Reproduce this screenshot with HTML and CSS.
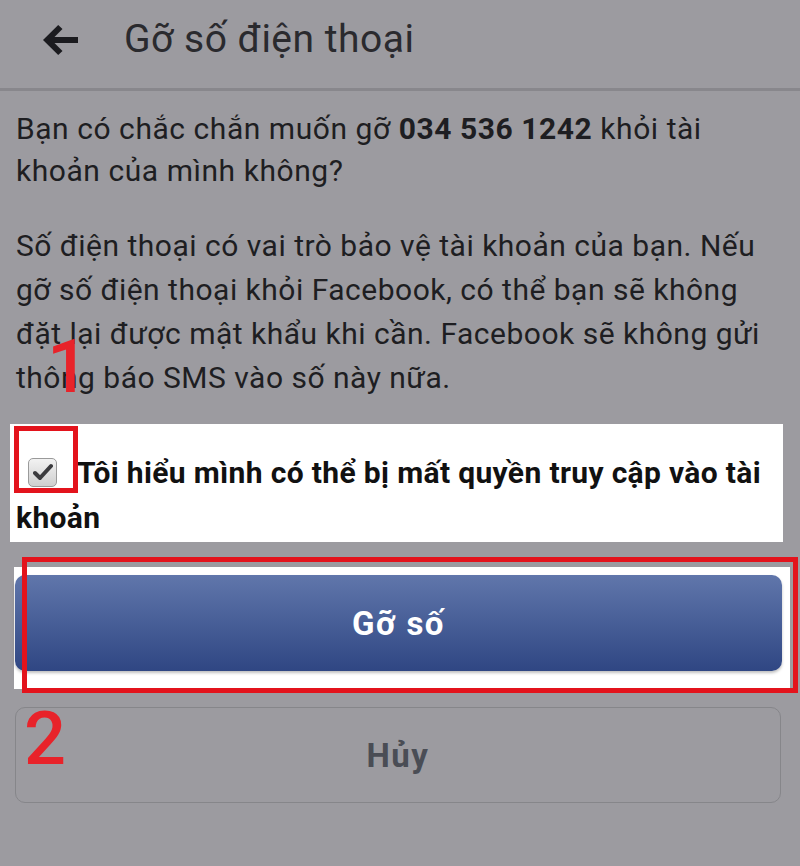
FILE: index.html
```html
<!DOCTYPE html>
<html lang="vi">
<head>
<meta charset="utf-8">
<title>Gỡ số điện thoại</title>
<link rel="stylesheet" href="styles.css">
</head>
<body>
<header class="topbar">
  <svg class="back" width="38" height="30" viewBox="0 0 38 30" aria-hidden="true">
    <path d="M37 12H13.5l8-8L17.2 0 2 15l15.2 15 4.3-4-8-8H37z" fill="#1b1b1f"/>
  </svg>
  <h1 class="title">Gỡ số điện thoại</h1>
</header>
<main class="content">
  <p class="q">Bạn có chắc chắn muốn gỡ <b>034 536 1242</b> khỏi tài<br>khoản của mình không?</p>
  <p class="info">Số điện thoại có vai trò bảo vệ tài khoản của bạn. Nếu<br>gỡ số điện thoại khỏi Facebook, có thể bạn sẽ không<br>đặt lại được mật khẩu khi cần. Facebook sẽ không gửi<br>thông báo SMS vào số này nữa.</p>
  <div class="confirm">
    <span class="check"><svg width="20" height="18" viewBox="0 0 20 18"><path d="M2 10l5 5L18 3" fill="none" stroke="#3b3b3e" stroke-width="4" stroke-linecap="round" stroke-linejoin="round"/></svg></span>Tôi hiểu mình có thể bị mất quyền truy cập vào tài<br>khoản
  </div>
  <div class="go-wrap">
    <button class="btn-primary">Gỡ số</button>
  </div>
  <button class="btn-cancel">Hủy</button>
</main>
<div class="mark mark-box1"></div>
<div class="mark mark-box2"></div>
<div class="mark num num1">1</div>
<div class="mark num num2">2</div>
</body>
</html>
```
FILE: styles.css
```css
html, body {
  margin: 0;
  padding: 0;
}
body {
  background: #9c9ba0;
  font-family: Roboto, "Noto Sans", sans-serif;
  color: #1e1e22;
  width: 800px;
  height: 866px;
  overflow: hidden;
  position: relative;
}
.topbar {
  height: 88px;
  border-bottom: 3px solid #88878c;
  display: flex;
  align-items: center;
  padding-left: 41px;
}
.back {
  display: block;
  margin-top: -8px;
}
.title {
  margin: -10px 0 0 45px;
  font-size: 39px;
  letter-spacing: 0.5px;
  font-weight: 400;
  color: #2a2a2e;
}
.content {
  padding: 0 0 0 16px;
}
.q {
  margin: 17px 0 0 0;
  font-size: 30px;
  letter-spacing: 0.55px;
  line-height: 42px;
  white-space: nowrap;
}
.info {
  margin: 32px 0 0 0;
  font-size: 30px;
  letter-spacing: 0.5px;
  line-height: 44px;
  white-space: nowrap;
}
.confirm {
  margin: 24px 17px 0 -6px;
  background: #fff;
  padding: 26px 6px 2px;
  font-size: 30px;
  letter-spacing: 0.35px;
  line-height: 45px;
  font-weight: 700;
  color: #111;
  white-space: nowrap;
}
.check {
  display: inline-flex;
  align-items: center;
  justify-content: center;
  width: 29px;
  height: 29px;
  box-sizing: border-box;
  border: 1px solid #9a9a9a;
  border-radius: 5px;
  background: linear-gradient(#f2f2f2, #cfcfcf);
  vertical-align: 2px;
  margin: 0 20px 0 12px;
}
.go-wrap {
  margin: 25px 10px 0 -2px;
  background: #fff;
  padding: 8px 8px 18px 1px;
}
.btn-primary {
  display: block;
  width: 100%;
  height: 96px;
  border: 0;
  border-radius: 10px;
  background: linear-gradient(#6076ab, #2f4683);
  color: #fff;
  font-family: Roboto, sans-serif;
  font-weight: 700;
  font-size: 33px;
  letter-spacing: 1.5px;
  box-shadow: 0 2px 3px rgba(0,0,0,0.25);
}
.btn-cancel {
  display: block;
  margin: 18px 0 0 -1px;
  width: 766px;
  height: 96px;
  border: 1px solid #86868a;
  border-radius: 10px;
  background: #9c9ba0;
  color: #4a4d55;
  font-family: Roboto, sans-serif;
  font-weight: 700;
  font-size: 33px;
  letter-spacing: 1.5px;
}
.mark {
  position: absolute;
}
.mark-box1 {
  left: 14px;
  top: 426px;
  width: 64px;
  height: 67px;
  box-sizing: border-box;
  border: 5px solid #e3131c;
}
.mark-box2 {
  left: 22px;
  top: 557px;
  width: 776px;
  height: 136px;
  box-sizing: border-box;
  border: 5px solid #e3131c;
}
.num {
  font-family: Roboto, sans-serif;
  font-weight: 500;
  color: #e8232a;
  font-size: 74px;
  line-height: 1;
}
.num1 {
  left: 47px;
  top: 330px;
}
.num2 {
  left: 24px;
  top: 702px;
}
```
